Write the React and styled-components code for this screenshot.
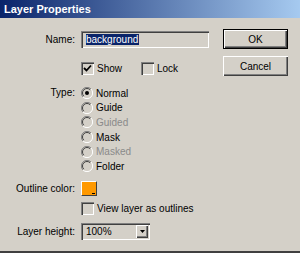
import React from "react";
import styled, { createGlobalStyle } from "styled-components";

const GlobalStyle = createGlobalStyle`
  html, body {
    margin: 0;
    padding: 0;
    background: #d4d0c8;
  }
  body {
    font-family: "Liberation Sans", Arial, sans-serif;
    font-size: 10px;
    color: #000;
  }
`;

const sunken = `
  box-shadow: inset 1px 1px #808080, inset 2px 2px #404040,
    inset -1px -1px #ffffff, inset -2px -2px #d4d0c8;
`;

const raised = `
  box-shadow: inset 1px 1px #ffffff, inset -1px -1px #404040,
    inset -2px -2px #808080;
`;

const Window = styled.div`
  width: 300px;
  height: 253px;
  box-sizing: border-box;
  background: #d4d0c8;
  border-bottom: 2px solid #404040;
  display: flex;
  flex-direction: column;
  overflow: hidden;
`;

const TitleBar = styled.div`
  height: 18px;
  flex: none;
  display: flex;
  align-items: center;
  padding-left: 4px;
  background: linear-gradient(to right, #0a246a, #a6caf0);
  color: #fff;
  font-weight: bold;
  font-size: 11px;
`;

const Body = styled.div`
  flex: 1;
  display: flex;
`;

const Form = styled.div`
  flex: 1;
  display: flex;
  flex-direction: column;
`;

const Row = styled.div`
  display: grid;
  grid-template-columns: 75px auto;
  column-gap: 6px;
  align-items: ${(p) => p.$align || "center"};
  margin-top: ${(p) => p.$top}px;
`;

const Label = styled.div`
  text-align: right;
  white-space: nowrap;
  line-height: ${(p) => p.$lh || "normal"};
`;

const Controls = styled.div`
  display: flex;
  align-items: center;
`;

const TextField = styled.div`
  width: 128px;
  height: 17px;
  box-sizing: border-box;
  padding-left: 5px;
  display: flex;
  align-items: center;
  ${sunken}
`;

const Selection = styled.span`
  background: #0a246a;
  color: #fff;
  line-height: 11px;
  padding: 0 1px 0 0;
`;

const CheckItem = styled.div`
  display: flex;
  align-items: center;
  gap: 3px;
  width: ${(p) => (p.$width ? `${p.$width}px` : "auto")};
`;

const Box = styled.div`
  width: 13px;
  height: 13px;
  flex: none;
  box-sizing: border-box;
  display: flex;
  align-items: center;
  justify-content: center;
  ${sunken}
`;

const RadioList = styled.div`
  display: flex;
  flex-direction: column;
`;

const RadioRow = styled.div`
  height: 14.6px;
  display: flex;
  align-items: center;
  gap: 3px;
  color: ${(p) => (p.$disabled ? "#8a8a8a" : "#000")};
`;

const Swatch = styled.div`
  position: relative;
  width: 16px;
  height: 15px;
  box-sizing: border-box;
  background: #ff9900;
  border-top: 1px solid #ffffff;
  border-left: 1px solid #ffffff;
  border-right: 1px solid #404040;
  border-bottom: 1px solid #404040;
`;

const Corner = styled.span`
  position: absolute;
  right: 1px;
  bottom: 1px;
  width: 3px;
  height: 1px;
  background: #000;
`;

const Select = styled.div`
  width: 69px;
  height: 17px;
  box-sizing: border-box;
  padding: 2px 2px 2px 5px;
  display: flex;
  align-items: center;
  justify-content: space-between;
  ${sunken}
`;

const ArrowButton = styled.div`
  width: 12px;
  height: 13px;
  box-sizing: border-box;
  display: flex;
  align-items: center;
  justify-content: center;
  ${raised}
`;

const Buttons = styled.div`
  width: 65px;
  margin-right: 12px;
  padding-top: 11px;
  display: flex;
  flex-direction: column;
  gap: 7px;
`;

const Button = styled.div`
  height: 20px;
  box-sizing: border-box;
  display: flex;
  align-items: center;
  justify-content: center;
  border: ${(p) => (p.$default ? "1px solid #000" : "none")};
  ${raised}
`;

function CheckBox({ checked }) {
  return (
    <Box>
      {checked && (
        <svg width="9" height="9" viewBox="0 0 9 9">
          <polyline points="1,4 3.5,6.5 8,1.5" fill="none" stroke="#000" strokeWidth="1.8" />
        </svg>
      )}
    </Box>
  );
}

function Radio({ checked }) {
  return (
    <svg width="12" height="12" viewBox="0 0 12 12">
      <path d="M10 2 A5.5 5.5 0 0 0 2 10" fill="none" stroke="#808080" strokeWidth="1" />
      <path d="M9.2 2.8 A4.5 4.5 0 0 0 2.8 9.2" fill="none" stroke="#404040" strokeWidth="1" />
      <path d="M10 2 A5.5 5.5 0 0 1 2 10" fill="none" stroke="#ffffff" strokeWidth="1" />
      {checked && <circle cx="6" cy="6" r="2" fill="#000" />}
    </svg>
  );
}

const types = [
  { name: "Normal", checked: true },
  { name: "Guide" },
  { name: "Guided", disabled: true },
  { name: "Mask" },
  { name: "Masked", disabled: true },
  { name: "Folder" },
];

export default function App() {
  return (
    <>
      <GlobalStyle />
      <Window>
        <TitleBar>Layer Properties</TitleBar>
        <Body>
          <Form>
            <Row $top={13}>
              <Label>Name:</Label>
              <TextField>
                <Selection>background</Selection>
              </TextField>
            </Row>
            <Row $top={14}>
              <Label />
              <Controls>
                <CheckItem $width={60}>
                  <CheckBox checked />
                  Show
                </CheckItem>
                <CheckItem>
                  <CheckBox />
                  Lock
                </CheckItem>
              </Controls>
            </Row>
            <Row $top={11} $align="start">
              <Label $lh="14.6px">Type:</Label>
              <RadioList>
                {types.map((t) => (
                  <RadioRow key={t.name} $disabled={t.disabled}>
                    <Radio checked={t.checked} />
                    {t.name}
                  </RadioRow>
                ))}
              </RadioList>
            </Row>
            <Row $top={7}>
              <Label>Outline color:</Label>
              <Controls>
                <Swatch>
                  <Corner />
                </Swatch>
              </Controls>
            </Row>
            <Row $top={6}>
              <Label />
              <CheckItem>
                <CheckBox />
                View layer as outlines
              </CheckItem>
            </Row>
            <Row $top={8}>
              <Label>Layer height:</Label>
              <Select>
                100%
                <ArrowButton>
                  <svg width="5" height="3" viewBox="0 0 5 3">
                    <polygon points="0,0 5,0 2.5,3" fill="#000" />
                  </svg>
                </ArrowButton>
              </Select>
            </Row>
          </Form>
          <Buttons>
            <Button $default>OK</Button>
            <Button>Cancel</Button>
          </Buttons>
        </Body>
      </Window>
    </>
  );
}
